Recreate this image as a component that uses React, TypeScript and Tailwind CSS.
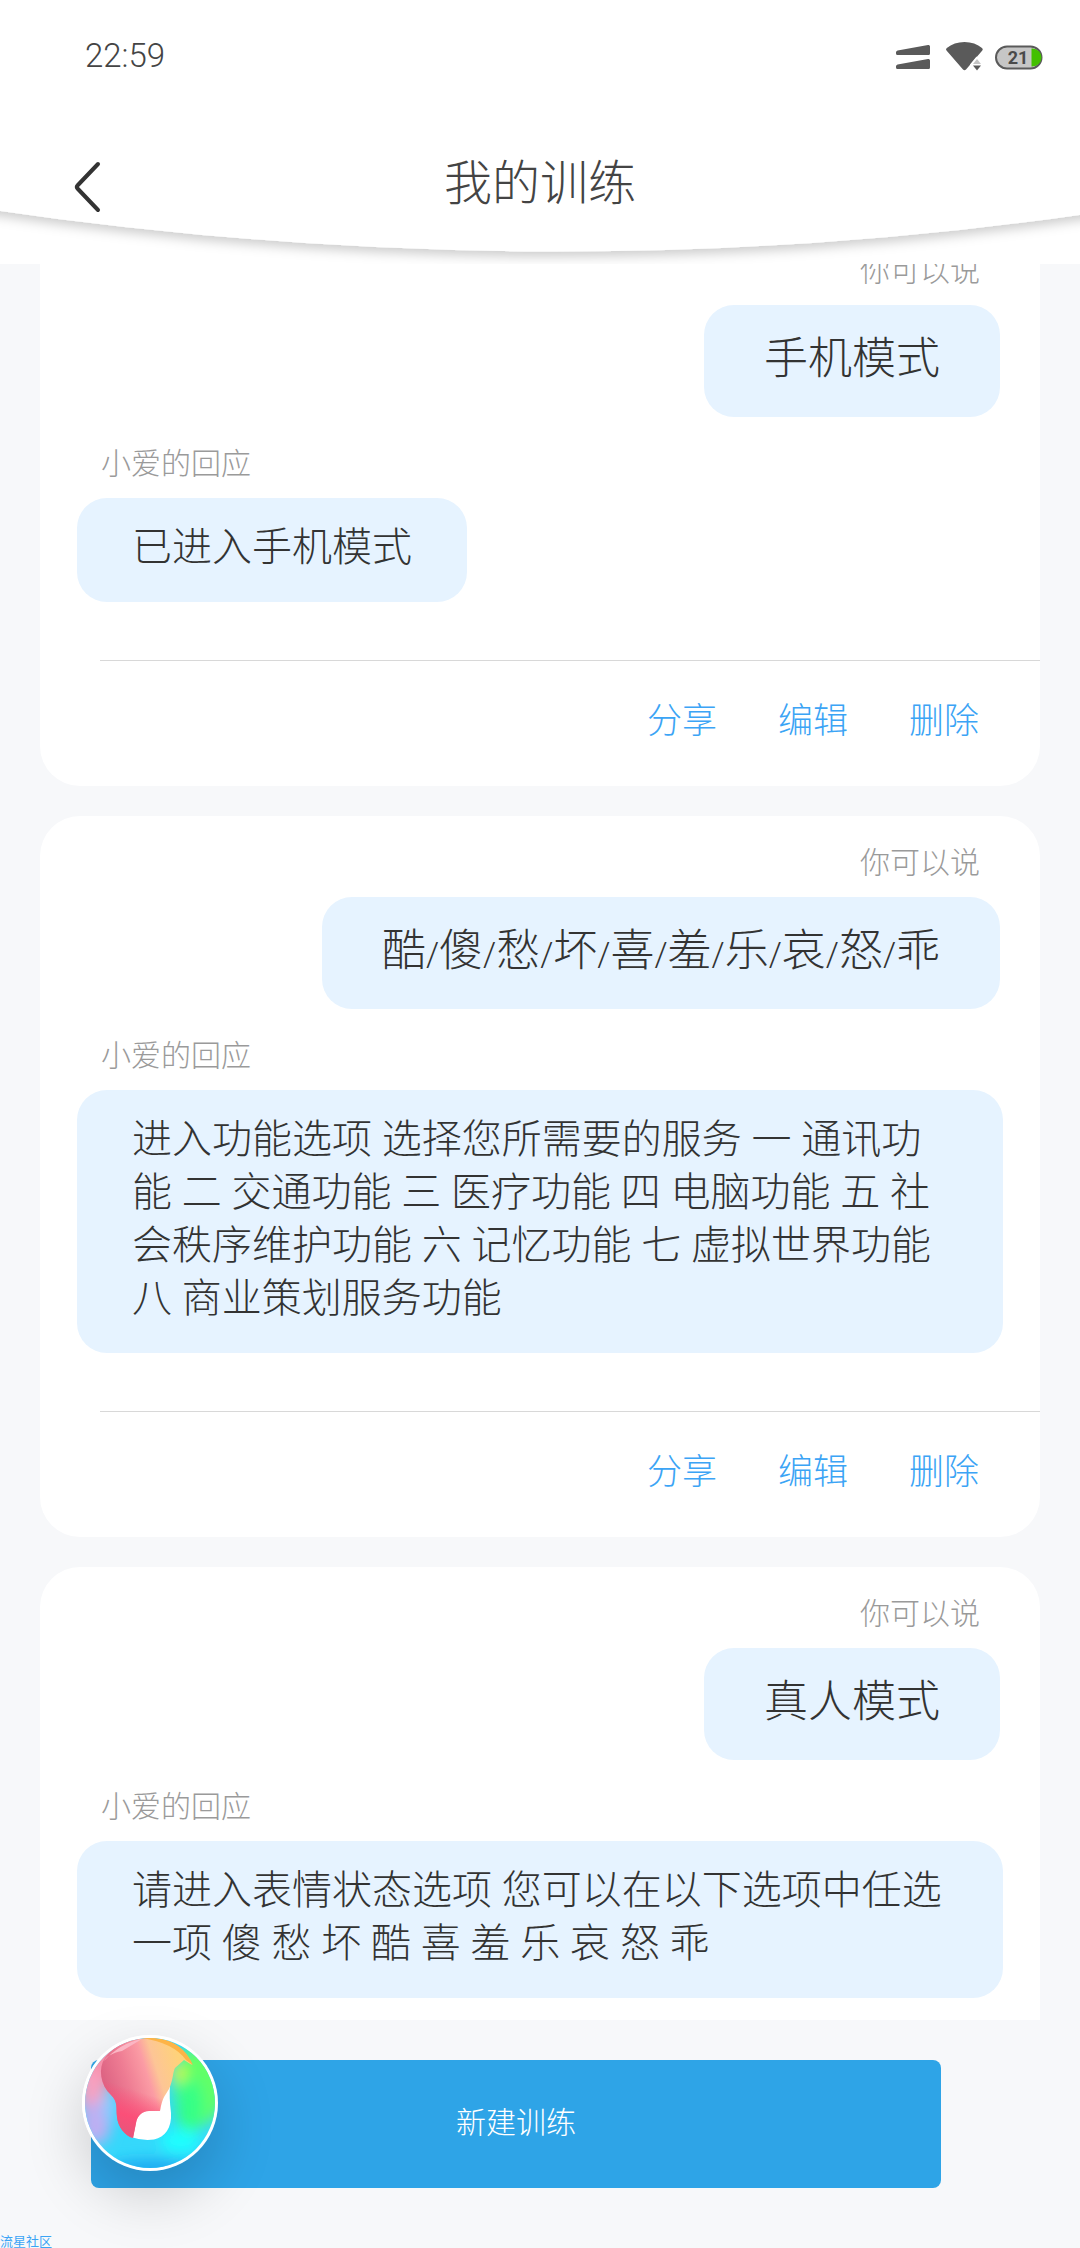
const SANS = "font-['Liberation_Sans','Noto_Sans_CJK_SC',sans-serif]";
const BLOB =
  "M23 23C34 8 52 3 68 3Q100 4 110 30L102 25 93 33C91 36 91 46 87 54 82 62 80 64 78 76H67C60 76 55 81 54 88L51 103C43 101 36 92 35 82 34 72 36 67 29 60 18 50 16 33 23 23Z";

type Training = {
  id: number;
  query: string[];
  reply: string;
};

const trainings: Training[] = [
  { id: 1, query: ["手机模式"], reply: "已进入手机模式" },
  {
    id: 2,
    query: ["酷", "傻", "愁", "坏", "喜", "羞", "乐", "哀", "怒", "乖"],
    reply:
      "进入功能选项 选择您所需要的服务 一 通讯功能 二 交通功能 三 医疗功能 四 电脑功能 五 社会秩序维护功能 六 记忆功能 七 虚拟世界功能 八 商业策划服务功能",
  },
  {
    id: 3,
    query: ["真人模式"],
    reply: "请进入表情状态选项 您可以在以下选项中任选一项 傻 愁 坏 酷 喜 羞 乐 哀 怒 乖",
  },
];

const actions = ["分享", "编辑", "删除"];

function StatusBar() {
  return (
    <div className="flex h-28 items-center justify-between pl-[85px] pr-[37px]">
      <time className="font-['Roboto',sans-serif] text-[33px] leading-10 font-light text-[#444]">22:59</time>
      <svg className="h-[45px] w-[158px]" viewBox="885 34 158 45" aria-hidden="true">
        <g fill="#5a5a5a">
          <path d="M896 52.5q0-1.6 1.6-2L928 45q2-.4 2 1.6v6.9q0 1.5-1.5 1.5h-31q-1.5 0-1.5-1.5z" />
          <path d="M896 66.5q0-1.6 1.6-2L928 59q2-.4 2 1.6v6.9q0 1.5-1.5 1.5h-31q-1.5 0-1.5-1.5z" />
          <path d="M946.5 50.5q-1.2-1.3.3-2.5Q954 42 964.5 42T982 48q1.5 1.2.3 2.5L966 69.5q-1.5 1.6-3 0z" />
        </g>
        <path d="M970 64.5l6.5-8 7 8v.8l-6.500 7.500z" fill="#fff" />
        <path d="M973 65.5h8l-4 5z" fill="#5a5a5a" />
        <path d="M973 64h8l-4-5z" fill="#c4c4c4" />
        <rect x="996" y="46.5" width="45.5" height="22" rx="11" fill="#c6c6c6" stroke="#5a5a5a" strokeWidth="2" />
        <path d="M1031.5 48.5h1a9 9 0 0 1 0 18h-1z" fill="#43c000" />
        <text x="1018" y="64" textAnchor="middle" fontFamily="Roboto, sans-serif" fontSize="18" fontWeight="700" fill="#4a4a4a">
          21
        </text>
      </svg>
    </div>
  );
}

function Header() {
  return (
    <header className="relative h-[264px] shrink-0 overflow-hidden bg-white">
      {/* curved lower edge */}
      <svg className="absolute inset-0 h-full w-full" viewBox="0 0 1080 264" preserveAspectRatio="none" aria-hidden="true">
        <defs>
          <filter id="edge" x="-10%" y="-10%" width="120%" height="130%">
            <feDropShadow dx="0" dy="5" stdDeviation="6" floodColor="#000" floodOpacity="0.2" />
          </filter>
        </defs>
        <path d="M-40-40H1120V209Q550 296-40 205Z" fill="#fff" filter="url(#edge)" />
      </svg>
      <div className="relative">
        <StatusBar />
        <div className="grid h-36 grid-cols-[1fr_auto_1fr] items-center">
          <button type="button" aria-label="返回" className="mt-1 ml-[70px] h-16 w-9">
            <svg className="h-16 w-9" viewBox="0 0 36 64" fill="none" stroke="#333" strokeWidth="4" strokeLinecap="round" strokeLinejoin="round">
              <path d="M28 10L7.5 31.5q-1.5 1.5 0 3L28 56" />
            </svg>
          </button>
          <h1 className="text-[48px] leading-[60px] font-light text-[#444]">我的训练</h1>
        </div>
      </div>
    </header>
  );
}

function Query({ words }: { words: string[] }) {
  return (
    <p className="mr-10 self-end rounded-[30px] bg-[#e6f3ff] px-15 pt-6 pb-7 text-[44px] leading-[60px] font-light text-[#333]">
      {words.map((word, idx) => (
        <span key={word}>
          {idx > 0 && <span className="font-['Roboto',sans-serif] text-[33px] leading-none font-light">/</span>}
          {word}
        </span>
      ))}
    </p>
  );
}

function TrainingCard({ training, open }: { training: Training; open: boolean }) {
  return (
    <article className={`flex flex-col rounded-t-[40px] bg-white pt-6 pl-[37px] ${open ? "grow" : "rounded-b-[40px]"}`}>
      <p className="mr-15 mb-3 self-end text-[30px] leading-[45px] font-light text-[#9a9a9a]">你可以说</p>
      <Query words={training.query} />
      <p className="mt-6 mb-3 ml-6 self-start text-[30px] leading-[45px] font-light text-[#9a9a9a]">小爱的回应</p>
      <p className="mr-[37px] self-start rounded-[30px] bg-[#e6f3ff] px-[55px] pt-[23px] pb-7 font-['Roboto','Noto_Sans_CJK_SC',sans-serif] text-[40px] leading-[53px] font-light text-[#333]">
        {training.reply}
      </p>
      {!open && (
        <div className="mt-[58px] ml-[23px] flex justify-end gap-[61px] border-t border-[#d8d8d8] pt-[35px] pr-[61px] pb-10">
          {actions.map((label) => (
            <button key={label} type="button" className="text-[35px] leading-[50px] font-light text-[#3ba4f5]">
              {label}
            </button>
          ))}
        </div>
      )}
    </article>
  );
}

function AssistantBall() {
  return (
    <button
      type="button"
      aria-label="小爱同学"
      className="absolute top-[15px] left-[82px] size-[136px] rounded-full shadow-[0_24px_60px_rgba(0,0,0,0.18)]"
    >
      <svg className="size-full" viewBox="0 0 136 136">
        <defs>
          <clipPath id="disc">
            <circle cx="68" cy="68" r="65" />
          </clipPath>
          <filter id="soft" x="-50%" y="-50%" width="200%" height="200%">
            <feGaussianBlur stdDeviation="7" />
          </filter>
          <linearGradient id="pink" x1="22" y1="52" x2="98" y2="28" gradientUnits="userSpaceOnUse">
            <stop offset="0" stopColor="#dc6282" />
            <stop offset="0.3" stopColor="#ee7c93" />
            <stop offset="0.56" stopColor="#fb9ba4" />
            <stop offset="0.7" stopColor="#fdc596" />
            <stop offset="1" stopColor="#fed27a" />
          </linearGradient>
          <linearGradient id="drip" x1="56" y1="56" x2="42" y2="98" gradientUnits="userSpaceOnUse">
            <stop offset="0" stopColor="#ff4d78" stopOpacity="0" />
            <stop offset="0.6" stopColor="#fb4f78" />
            <stop offset="1" stopColor="#e8557b" />
          </linearGradient>
        </defs>
        <circle cx="68" cy="68" r="68" fill="#fff" />
        <g clipPath="url(#disc)">
          <rect width="136" height="136" fill="#35d8fb" />
          <g filter="url(#soft)">
            <ellipse cx="24" cy="24" rx="40" ry="28" fill="#f58fa8" />
            <ellipse cx="10" cy="58" rx="13" ry="26" fill="#f9a0c0" />
            <ellipse cx="14" cy="88" rx="15" ry="22" fill="#c0aef2" />
            <ellipse cx="28" cy="72" rx="8" ry="14" fill="#86cbff" />
            <ellipse cx="118" cy="50" rx="26" ry="40" fill="#62ff68" />
            <ellipse cx="108" cy="72" rx="14" ry="28" fill="#35ff86" />
            <ellipse cx="96" cy="38" rx="7" ry="8" fill="#e8f52c" />
            <ellipse cx="98" cy="106" rx="20" ry="12" fill="#1cffff" />
            <ellipse cx="70" cy="133" rx="44" ry="8" fill="#1fa6f0" />
          </g>
          <path d="M88 50C84 57 80 60 79 66L76 76H54L49 102Q60 106 72 104.5C83 102 90 93 89 78Q87 62 88 50Z" fill="#fff" />
          <path d={BLOB} fill="url(#pink)" />
          <path d={BLOB} fill="url(#drip)" />
          <path d="M60 3Q98 0 111 30L104 25Q92 8 60 3Z" fill="#fdb447" />
          <path d="M22 26Q38 8 60 4 50 10 40 16C30 18 24 22 22 26Z" fill="#fbb6c4" />
        </g>
      </svg>
    </button>
  );
}

export default function App() {
  return (
    <div className={`flex min-h-screen flex-col bg-[#f7f8fa] ${SANS}`}>
      <Header />
      <main className="flex grow flex-col overflow-hidden px-10">
        {/* list is scrolled a little, so the first card starts under the header */}
        <div className="-mt-10 flex grow flex-col gap-[30px]">
          {trainings.map((training, idx) => (
            <TrainingCard key={training.id} training={training} open={idx === trainings.length - 1} />
          ))}
        </div>
      </main>
      <footer className="relative flex h-[228px] shrink-0 flex-col justify-between pt-10">
        <button type="button" className="mr-[139px] ml-[91px] h-32 rounded-lg bg-[#2ea4e7] pb-1 text-[30px] font-light text-white">
          新建训练
        </button>
        <AssistantBall />
        <small className="text-[13px] leading-[13px] text-[#3ba4f5]">流星社区</small>
      </footer>
    </div>
  );
}
